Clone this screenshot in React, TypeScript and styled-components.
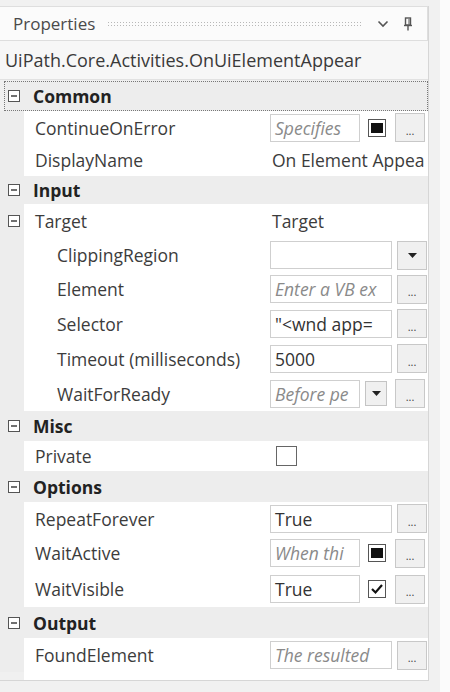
import { FC } from "react";
import styled, { createGlobalStyle } from "styled-components";

const GlobalStyle = createGlobalStyle`
    html, body {
        margin: 0;
        padding: 0;
        background: #f7f7f7;
    }
    body {
        font-family: "Open Sans", "Noto Sans", "Liberation Sans", sans-serif;
        color: #333;
    }
`;

type Widget = "none" | "square" | "check" | "checked" | "drop";

interface Prop {
    name: string;
    h: number;
    indent?: boolean;
    value?: string;
    placeholder?: boolean;
    plain?: boolean;
    box?: "wide" | "short" | "none";
    widget?: Widget;
    button?: "dots" | "drop" | "none";
    expander?: boolean;
}

interface Category {
    title: string;
    h: number;
    focused?: boolean;
    props: Prop[];
}

// values are the parts the narrow column shows; row heights follow the capture
const categories: Category[] = [
    {
        title: "Common",
        h: 30,
        focused: true,
        props: [
            { name: "ContinueOnError", h: 33, value: "Specifies", placeholder: true, box: "short", widget: "square", button: "dots" },
            { name: "DisplayName", h: 32, value: "On Element Appea", plain: true, box: "none", button: "none" },
        ],
    },
    {
        title: "Input",
        h: 28,
        props: [
            { name: "Target", h: 34, value: "Target", plain: true, box: "none", button: "none", expander: true },
            { name: "ClippingRegion", h: 34, indent: true, value: "", box: "wide", button: "drop" },
            { name: "Element", h: 34, indent: true, value: "Enter a VB ex", placeholder: true, box: "wide", button: "dots" },
            { name: "Selector", h: 35, indent: true, value: "\"<wnd app=", box: "wide", button: "dots" },
            { name: "Timeout (milliseconds)", h: 35, indent: true, value: "5000", box: "wide", button: "dots" },
            { name: "WaitForReady", h: 35, indent: true, value: "Before pe", placeholder: true, box: "short", widget: "drop", button: "dots" },
        ],
    },
    {
        title: "Misc",
        h: 30,
        props: [{ name: "Private", h: 30, box: "none", widget: "check", button: "none" }],
    },
    {
        title: "Options",
        h: 31,
        props: [
            { name: "RepeatForever", h: 33, value: "True", box: "wide", button: "dots" },
            { name: "WaitActive", h: 36, value: "When thi", placeholder: true, box: "short", widget: "square", button: "dots" },
            { name: "WaitVisible", h: 36, value: "True", box: "short", widget: "checked", button: "dots" },
        ],
    },
    {
        title: "Output",
        h: 31,
        props: [{ name: "FoundElement", h: 34, value: "The resulted", placeholder: true, box: "wide", button: "dots" }],
    },
];

const MinusBox: FC = () => (
    <svg width="12" height="12" viewBox="0 0 12 12">
        <rect x="0.5" y="0.5" width="11" height="11" fill="#fff" stroke="#555" />
        <line x1="3" y1="6" x2="9" y2="6" stroke="#333" strokeWidth="1.4" />
    </svg>
);

const Chevron: FC = () => (
    <svg width="12" height="8" viewBox="0 0 12 8">
        <polyline points="1.5,1.5 6,6 10.5,1.5" fill="none" stroke="#555" strokeWidth="1.6" />
    </svg>
);

const Pin: FC = () => (
    <svg width="10" height="14" viewBox="0 0 10 14">
        <rect x="2.5" y="1" width="5" height="7" fill="none" stroke="#555" strokeWidth="1.4" />
        <line x1="1" y1="8.5" x2="9" y2="8.5" stroke="#555" strokeWidth="1.4" />
        <line x1="5" y1="9" x2="5" y2="13.5" stroke="#555" strokeWidth="1.4" />
        <line x1="6" y1="2" x2="6" y2="7.5" stroke="#555" strokeWidth="1" />
    </svg>
);

const DropArrow: FC = () => (
    <svg width="9" height="5" viewBox="0 0 9 5">
        <polygon points="0,0 9,0 4.5,5" fill="#222" />
    </svg>
);

const CheckMark: FC = () => (
    <svg width="14" height="12" viewBox="0 0 14 12">
        <polyline points="2,6 5.5,9.5 12,2" fill="none" stroke="#111" strokeWidth="2.2" />
    </svg>
);

const PropertyRowView: FC<{ p: Prop }> = ({ p }) => (
    <PropertyRow $h={p.h}>
        <Gutter>{p.expander && <MinusBox />}</Gutter>
        <Name $indent={p.indent}>{p.name}</Name>
        <ValueCell>
            {p.plain && <PlainValue>{p.value}</PlainValue>}
            {!p.plain && p.box !== "none" && (
                <TextBox $wide={p.box === "wide"} $placeholder={p.placeholder}>
                    {p.value}
                </TextBox>
            )}
            {p.widget === "square" && (
                <SmallBox>
                    <FilledSquare />
                </SmallBox>
            )}
            {p.widget === "checked" && (
                <SmallBox>
                    <CheckMark />
                </SmallBox>
            )}
            {p.widget === "drop" && (
                <SmallButton>
                    <DropArrow />
                </SmallButton>
            )}
            {p.widget === "check" && <CheckBox />}
            {p.button === "dots" && <DotsButton>...</DotsButton>}
            {p.button === "drop" && (
                <DotsButton $arrow>
                    <DropArrow />
                </DotsButton>
            )}
        </ValueCell>
    </PropertyRow>
);

export default function App() {
    return (
        <>
            <GlobalStyle />
            <Page>
                <Panel>
                    <TitleBar>
                        <Title>Properties</Title>
                        <Grip />
                        <TitleIcon><Chevron /></TitleIcon>
                        <TitleIcon><Pin /></TitleIcon>
                    </TitleBar>
                    <TypeName>UiPath.Core.Activities.OnUiElementAppear</TypeName>
                    <Grid>
                        {categories.map(c => (
                            <div key={c.title}>
                                <CategoryRow $h={c.h} $focused={c.focused}>
                                    <MinusBox />
                                    <CategoryTitle>{c.title}</CategoryTitle>
                                </CategoryRow>
                                {c.props.map(p => <PropertyRowView key={p.name} p={p} />)}
                            </div>
                        ))}
                        <Filler />
                    </Grid>
                </Panel>
            </Page>
        </>
    );
}

const Page = styled.div`
    width: 450px;
    height: 692px;
    display: flex;
    align-items: flex-start;
    padding-top: 6px;
    box-sizing: border-box;
    background: linear-gradient(to right, #f1f1f1 0, #f1f1f1 440px, #fbfbfb 440px);
`;

const Panel = styled.div`
    width: 428px;
    display: flex;
    flex-direction: column;
    background: #f0f0f0;
    border-right: 1px solid #d6d6d6;
    border-bottom: 1px solid #d6d6d6;
`;

const TitleBar = styled.div`
    height: 33px;
    display: flex;
    align-items: center;
    gap: 10px;
    padding: 0 14px 0 13px;
    background: #fbfbfb;
    border: 1px solid #dedede;
    border-left: none;
`;

const Title = styled.span`
    font-size: 17px;
    color: #4a4a4a;
`;

const Grip = styled.div`
    flex: 1;
    height: 6px;
    margin: 0 0 0 2px;
    background-image: radial-gradient(circle, #b8b8b8 0.8px, transparent 1px);
    background-size: 3px 3px;
`;

const TitleIcon = styled.span`
    display: flex;
    align-items: center;
    margin-left: 4px;
`;

const TypeName = styled.div`
    height: 38px;
    display: flex;
    align-items: center;
    padding-left: 5px;
    font-size: 18px;
    color: #3a3a3a;
    background: #f7f7f7;
    border-bottom: 1px solid #e2e2e2;
`;

const Grid = styled.div`
    display: flex;
    flex-direction: column;
    margin-top: 1px;
`;

const CategoryRow = styled.div<{ $h: number; $focused?: boolean }>`
    height: ${p => p.$h}px;
    display: flex;
    align-items: center;
    gap: 13px;
    box-sizing: border-box;
    background: #ededed;
    outline: ${p => (p.$focused ? "1px dotted #777" : "none")};
    outline-offset: -1px;
    margin-left: ${p => (p.$focused ? "4px" : "0")};
    padding-left: ${p => (p.$focused ? "4px" : "8px")};
`;

const CategoryTitle = styled.span`
    font-size: 17.5px;
    font-weight: 700;
    color: #222;
`;

const PropertyRow = styled.div<{ $h: number }>`
    height: ${p => p.$h}px;
    display: grid;
    grid-template-columns: 24px 246px 1fr;
    align-items: center;
    background: #fff;
`;

const Gutter = styled.div`
    height: 100%;
    background: #ededed;
    display: flex;
    align-items: center;
    padding-left: 8px;
    box-sizing: border-box;
    overflow: visible;
`;

const Name = styled.span<{ $indent?: boolean }>`
    font-size: 17.5px;
    color: #3c3c3c;
    padding-left: ${p => (p.$indent ? "33px" : "11px")};
    white-space: nowrap;
    overflow: hidden;
`;

const ValueCell = styled.div`
    display: flex;
    align-items: center;
    gap: 5px;
    padding-right: 3px;
    overflow: hidden;
    height: 100%;
`;

const PlainValue = styled.span`
    font-size: 17.5px;
    color: #3c3c3c;
    white-space: nowrap;
    overflow: hidden;
    padding-left: 2px;
`;

const TextBox = styled.div<{ $wide?: boolean; $placeholder?: boolean }>`
    width: ${p => (p.$wide ? "122px" : "90px")};
    height: 28px;
    box-sizing: border-box;
    border: 1px solid #cfcfcf;
    background: #fff;
    display: flex;
    align-items: center;
    padding-left: 4px;
    font-size: 17.5px;
    font-style: ${p => (p.$placeholder ? "italic" : "normal")};
    color: ${p => (p.$placeholder ? "#8a8a8a" : "#333")};
    white-space: nowrap;
    overflow: hidden;
    flex-shrink: 0;
`;

const SmallBox = styled.div`
    width: 18px;
    height: 18px;
    box-sizing: border-box;
    border: 1px solid #555;
    background: #fff;
    display: flex;
    align-items: center;
    justify-content: center;
    margin: 0 3px;
    flex-shrink: 0;
`;

const FilledSquare = styled.div`
    width: 12px;
    height: 10px;
    background: #111;
`;

const CheckBox = styled.div`
    width: 21px;
    height: 20px;
    box-sizing: border-box;
    border: 1px solid #666;
    background: #fff;
    margin-left: 6px;
`;

const SmallButton = styled.div`
    width: 22px;
    height: 25px;
    box-sizing: border-box;
    border: 1px solid #c4c4c4;
    background: #f0f0f0;
    display: flex;
    align-items: center;
    justify-content: center;
    flex-shrink: 0;
`;

const DotsButton = styled.div<{ $arrow?: boolean }>`
    width: 30px;
    height: 29px;
    box-sizing: border-box;
    border: 1px solid #c8c8c8;
    background: #f0f0f0;
    display: flex;
    align-items: center;
    justify-content: center;
    padding-top: ${p => (p.$arrow ? "0" : "5px")};
    font-size: 11px;
    color: #444;
    margin-left: auto;
    flex-shrink: 0;
`;

const Filler = styled.div`
    height: 8px;
    background: #fff;
    margin-left: 24px;
`;
